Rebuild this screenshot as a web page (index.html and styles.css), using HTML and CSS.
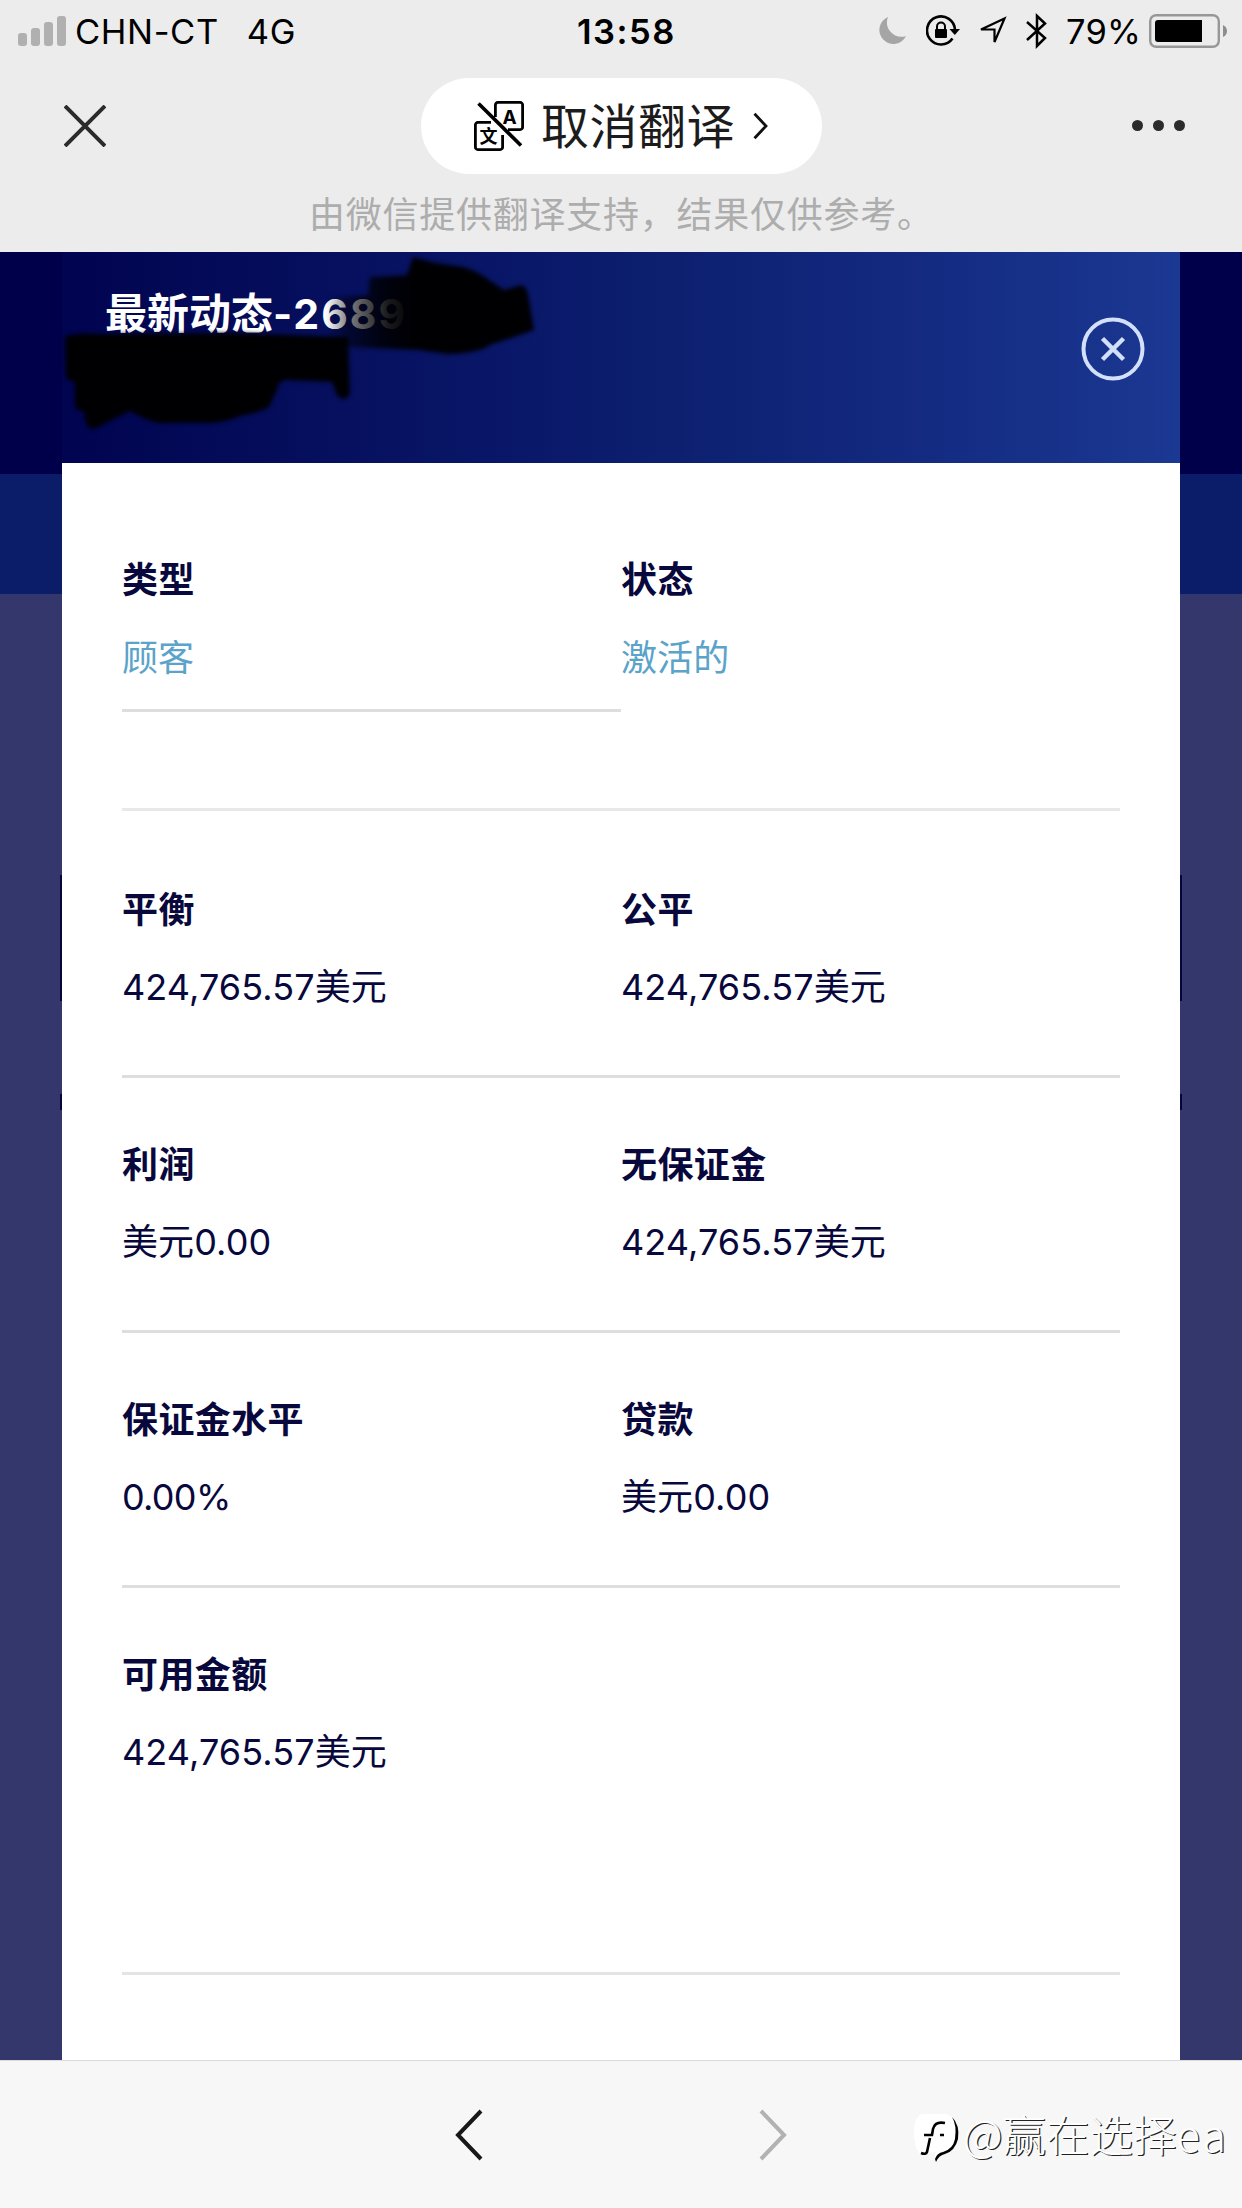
FILE: index.html
```html
<!DOCTYPE html>
<html lang="zh-CN">
  <head>
    <meta charset="UTF-8" />
    <title>最新动态</title>
    <link rel="stylesheet" href="styles.css">
  </head>
  <body>
    <header class="top">
      <div class="status">
        <div class="status-left">
          <svg class="signal" width="49" height="31" viewBox="0 0 49 31" fill="#b0b0b0">
            <rect x="0" y="17" width="9" height="13" rx="3" />
            <rect x="13" y="12" width="9" height="18" rx="3" />
            <rect x="26" y="6" width="9" height="24" rx="3" />
            <rect x="39" y="0" width="9" height="30" rx="3" />
          </svg>
          <span class="carrier">CHN-CT</span>
          <span class="network">4G</span>
        </div>
        <span class="clock">13:58</span>
        <div class="status-right">
          <svg class="moon" width="28" height="28" viewBox="0 0 28 28">
            <path d="M9 0A14 14 0 1 0 27 19A14.5 14.5 0 0 1 9 0Z" fill="#a5a5a5" />
          </svg>
          <svg class="lock" width="34" height="32" viewBox="0 0 34 32">
            <path d="M26.5 23.5A14 14 0 1 1 29 15" fill="none" stroke="#000" stroke-width="2.6" />
            <path d="M23.5 14H34L28.8 20Z" />
            <rect x="9" y="14" width="12" height="9" rx="1" />
            <path d="M11 15V11.5a4 4 0 0 1 8 0V15" fill="none" stroke="#000" stroke-width="2" />
          </svg>
          <svg class="arrow" width="30" height="30" viewBox="0 0 30 30">
            <path d="M3 13.5L26.5 2.5L16.5 26V13.5Z" fill="none" stroke="#000" stroke-width="2.2" />
          </svg>
          <svg class="bluetooth" width="22" height="36" viewBox="0 0 22 36">
            <path d="M1 9L19 25L11 33V3L19 10.5L1 27" fill="none" stroke="#000" stroke-width="2.5" />
          </svg>
          <span class="percent">79%</span>
          <svg class="battery" width="79" height="34" viewBox="0 0 79 34">
            <rect x="1.2" y="1.2" width="68.6" height="31.6" rx="6" fill="none" stroke="#979797" stroke-width="2.4" />
            <path d="M9 6H53V28H9a3 3 0 0 1-3-3V9a3 3 0 0 1 3-3Z" />
            <path d="M74 11q4 2 4 6t-4 6Z" fill="#8d8d8d" />
          </svg>
        </div>
      </div>

      <div class="nav">
        <svg class="nav-close" width="42" height="42" viewBox="0 0 42 42">
          <path d="M1 1L41 41M41 1L1 41" stroke="#2b2b2b" stroke-width="4" />
        </svg>
        <div class="translate">
          <svg width="50" height="50" viewBox="0 0 50 50" fill="none" stroke="#000" stroke-width="2.8">
            <path d="M21.4 16V4a2.5 2.5 0 0 1 2.5-2.6H46A2.5 2.5 0 0 1 48.6 4V26A2.5 2.5 0 0 1 46 28.6H34" />
            <path d="M17 21.4H4A2.5 2.5 0 0 0 1.4 24V46A2.5 2.5 0 0 0 4 48.6H26A2.5 2.5 0 0 0 28.6 46V34" />
            <path d="M4.5 2.5L47 44.5" stroke-width="3.6" />
            <text x="35.5" y="22.5" class="icon-a">A</text>
            <text x="14.5" y="42" class="icon-wen">文</text>
          </svg>
          <span>取消翻译</span>
          <svg class="go" width="15" height="28" viewBox="0 0 15 28">
            <path d="M1.5 1.8L13 14L1.5 26.2" fill="none" stroke="#111" stroke-width="2.8" />
          </svg>
        </div>
        <div class="more"><i></i><i></i><i></i></div>
      </div>

      <p class="notice">由微信提供翻译支持，结果仅供参考。</p>
    </header>

    <main class="page">
      <section class="dialog">
        <div class="dialog-head">
          <h1>最新动态<span>-2689</span></h1>
          <svg class="dialog-close" width="64" height="64" viewBox="0 0 64 64" fill="none" stroke="#d3e0fb">
            <circle cx="32" cy="32" r="29.5" stroke-width="4" />
            <path d="M21.5 21.5L42.5 42.5M42.5 21.5L21.5 42.5" stroke-width="4.5" />
          </svg>
          <!-- account number is painted over -->
          <svg class="scribble" width="1118" height="211" viewBox="62 252 1118 211">
            <defs>
              <linearGradient id="fade" gradientUnits="userSpaceOnUse" x1="326" y1="0" x2="415" y2="0">
                <stop offset="0" stop-color="#000003" stop-opacity="0" />
                <stop offset="0.25" stop-color="#000003" stop-opacity="0.5" />
                <stop offset="0.5" stop-color="#000003" stop-opacity="0.74" />
                <stop offset="0.7" stop-color="#000003" stop-opacity="0.9" />
                <stop offset="1" stop-color="#000003" />
              </linearGradient>
            </defs>
            <path fill="url(#fade)" d="M413 257L435 263L463 267Q477 271 486 278L504 290L522 285Q528 288 529 300L534 330L514 337L490 345Q480 353 447 354L419 350L348 347L326 336L326 298L368 295L370 277L395 276L407 275Z" />
            <path fill="#000003" d="M65 337Q72 332 100 334L237 333L348 337L350 393Q345 404 337 395L332 382L285 380Q278 382 277 390L269 407Q262 412 240 416Q225 424 200 423L158 423Q145 420 130 411L94 429Q85 429 84 412L75 408V383L66 378Z" />
          </svg>
        </div>
        <div class="dialog-body">
          <div class="row row-first">
            <div class="cell"><h2>类型</h2><p class="link">顾客</p></div>
            <div class="cell"><h2>状态</h2><p class="link">激活的</p></div>
          </div>
          <div class="row">
            <div class="cell"><h2>平衡</h2><p>424,765.57美元</p></div>
            <div class="cell"><h2>公平</h2><p>424,765.57美元</p></div>
          </div>
          <div class="row">
            <div class="cell"><h2>利润</h2><p>美元0.00</p></div>
            <div class="cell"><h2>无保证金</h2><p>424,765.57美元</p></div>
          </div>
          <div class="row">
            <div class="cell"><h2>保证金水平</h2><p class="level">0.00%</p></div>
            <div class="cell"><h2>贷款</h2><p>美元0.00</p></div>
          </div>
          <div class="row row-last">
            <div class="cell"><h2>可用金额</h2><p>424,765.57美元</p></div>
          </div>
        </div>
      </section>
    </main>

    <footer class="toolbar">
      <svg width="28" height="52" viewBox="0 0 28 52">
        <path d="M26 2L3 26L26 50" fill="none" stroke="#181818" stroke-width="4" />
      </svg>
      <svg width="28" height="52" viewBox="0 0 28 52">
        <path d="M2 2L25 26L2 50" fill="none" stroke="#b2b2b2" stroke-width="4" />
      </svg>
      <div class="watermark">
        <svg width="46" height="52" viewBox="0 0 46 52">
          <path d="M8 2H31Q43 4 43 20Q43 36 30 40Q24 42 22 48Q20 44 22 40L15 41Q10 45 5 41Q0 35 0 20Q0 5 8 2Z" fill="#fff" />
          <path d="M38 5Q46 13 44 27Q41 39 31 42Q25 43 22 50L21 47Q23 41 29 40Q39 37 41 27Q43 13 38 5Z" />
          <path d="M31 11Q21 9 19 17L18 23H10M16 26L13 40Q12 43 7 41M26 23H30" fill="none" stroke="#000" stroke-width="2.6" />
        </svg>
        <span>@赢在选择<b>ea</b></span>
      </div>
    </footer>
  </body>
</html>
```

FILE: styles.css
```css
* {
  box-sizing: border-box;
}

body {
  margin: 0;
  width: 1242px;
  height: 2208px;
  display: flex;
  flex-direction: column;
  font-family: Inter, "Noto Sans CJK SC", sans-serif;
  overflow: hidden;
}

h1, h2, p {
  margin: 0;
}

svg {
  display: block;
  flex: none;
}

/* top bar */
.top {
  height: 252px;
  background-color: #ececec;
}

.status {
  height: 62px;
  display: grid;
  grid-template-columns: 577px 1fr 363px;
  align-items: center;
  font-size: 34.5px;
  line-height: 42px;
  color: #000;
}

.status-left, .status-right {
  display: flex;
  align-items: center;
}

.status-left {
  padding-left: 18px;
}

.carrier {
  margin-left: 8px;
  letter-spacing: 0.6px;
}

.network {
  margin-left: 28px;
  letter-spacing: 0.8px;
}

.clock {
  font-weight: 600;
  letter-spacing: 1.5px;
}

.carrier, .network, .clock, .percent {
  padding-top: 2px;
}

.lock {
  margin-left: 19px;
}

.arrow {
  margin-left: 18px;
}

.bluetooth {
  margin-left: 18px;
}

.percent {
  margin-left: 18px;
  width: 72px;
  letter-spacing: 0.2px;
}

.battery {
  margin-left: 11px;
}

.nav {
  height: 127px;
  padding: 0 57px 0 64px;
  display: flex;
  align-items: center;
}

.translate {
  width: 401px;
  height: 96px;
  margin-left: 315px;
  padding-left: 53px;
  display: flex;
  align-items: center;
  border-radius: 48px;
  background-color: #fff;
  color: #1c1c1c;
  font-size: 48px;
  letter-spacing: 0.5px;
}

.translate span {
  margin-left: 17px;
  padding-top: 2px;
  line-height: 70px;
}

.go {
  margin-left: 18px;
}

.icon-a, .icon-wen {
  fill: #000;
  stroke: none;
  font-size: 18px;
  font-weight: 700;
  letter-spacing: 0;
  text-anchor: middle;
}

.icon-a {
  font-size: 19px;
}

.more {
  margin-left: auto;
  display: flex;
  gap: 10px;
}

.more i {
  width: 11px;
  height: 11px;
  border-radius: 50%;
  background-color: #2b2b2b;
}

.notice {
  margin-top: -1px;
  padding-left: 309px;
  font-size: 36px;
  letter-spacing: 0.75px;
  line-height: 54px;
  color: #adadad;
}

/* page behind the dialog */
.page {
  flex: 1;
  padding: 0 62px;
  background-color: #33376c;
  background-image:
    linear-gradient(#05053a, #05053a),
    linear-gradient(#05053a, #05053a),
    linear-gradient(#00004a 222px, #0b1c69 222px);
  background-repeat: no-repeat;
  background-position: 60px 623px, 60px 842px, 0 0;
  background-size: 1122px 126px, 1122px 16px, 100% 342px;
}

.dialog {
  height: 100%;
  display: flex;
  flex-direction: column;
}

.dialog-head {
  position: relative;
  height: 211px;
  padding: 32px 35px 0 43px;
  display: flex;
  justify-content: space-between;
  background: linear-gradient(90deg, #010450 0%, #06105e 25%, #0a186a 42%, #0d2070 55%, #142b82 78%, #1b3892 100%);
  color: #fff;
}

.dialog-head h1 {
  font-size: 42px;
  font-weight: 700;
  line-height: 60px;
}

.dialog-head h1 span {
  font-size: 41px;
  letter-spacing: 2px;
}

.dialog-close {
  margin-top: 33px;
}

.scribble {
  position: absolute;
  top: 0;
  left: 0;
  filter: blur(2px);
}

.dialog-body {
  flex: 1;
  padding: 30px 60px 0;
  background-color: #fff;
  color: #08083c;
}

.row {
  height: 255px;
  display: grid;
  grid-template-columns: 499px 1fr;
  border-bottom: 3px solid #dedede;
}

.cell {
  padding-top: 60px;
}

.cell h2, .cell p {
  font-size: 36px;
  line-height: 54px;
}

.cell h2 {
  font-weight: 700;
  letter-spacing: 0.4px;
}

.cell p {
  margin-top: 23px;
  letter-spacing: 0.1px;
}

.cell .level {
  letter-spacing: -0.7px;
}

.cell .link {
  margin-top: 24px;
  color: #5ba3c9;
}

.row-first {
  height: 318px;
  margin-bottom: 12px;
  align-items: start;
  border-bottom-color: #e8e8e8;
}

.row-first .cell {
  height: 219px;
}

.row-first .cell:first-child {
  border-bottom: 3px solid #dedede;
}

.row-last {
  height: 387px;
  border-bottom-color: #e4e4e4;
}

/* bottom toolbar */
.toolbar {
  position: relative;
  height: 148px;
  padding-left: 455px;
  display: flex;
  align-items: center;
  gap: 276px;
  background-color: #f7f7f7;
  border-top: 1px solid #dcdcdc;
}

.watermark {
  position: absolute;
  left: 914px;
  top: 46px;
  display: flex;
  align-items: center;
  gap: 3px;
  color: #fff;
  font-size: 43.5px;
  line-height: 60px;
  font-family: "Noto Sans CJK SC", sans-serif;
  font-weight: 300;
  text-shadow: 1.2px 1.2px 0 #222;
}

.watermark svg {
  margin-top: 5px;
}

.watermark span {
  margin-top: -4px;
}

.watermark b {
  font-weight: 300;
  letter-spacing: 3px;
}
```
